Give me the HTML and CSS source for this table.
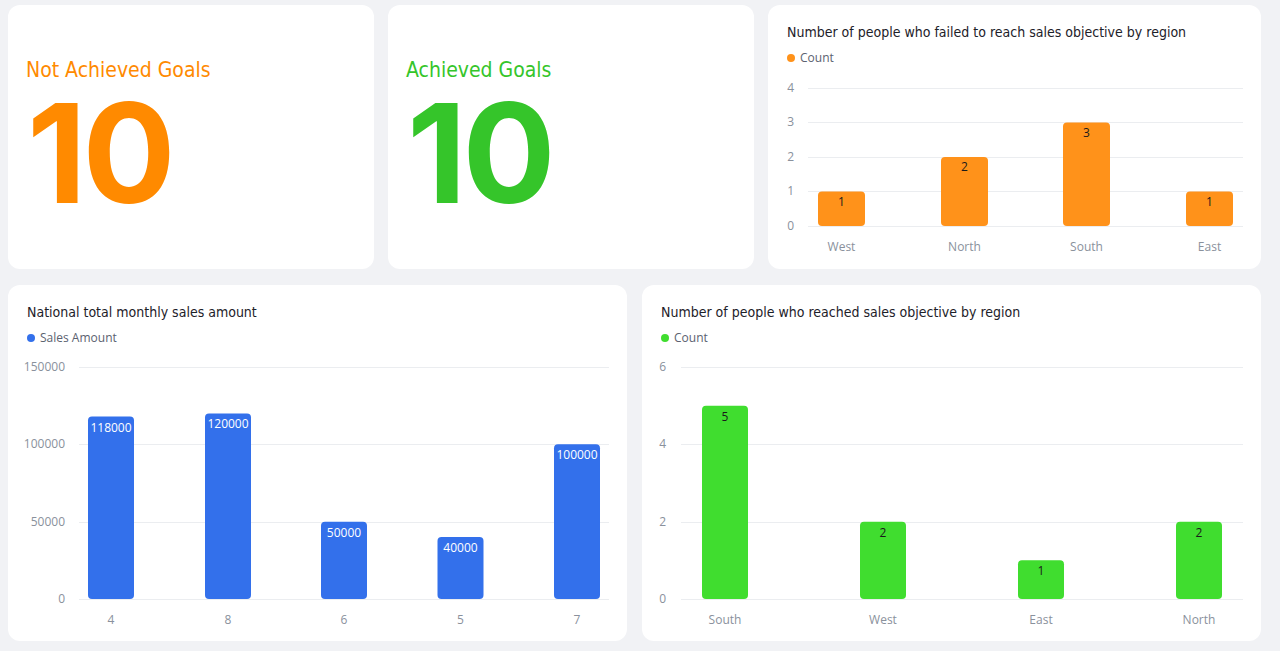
FILE: index.html
```html
<!DOCTYPE html>
<html>
<head>
<meta charset="utf-8">
<link rel="stylesheet" href="styles.css">
</head>
<body>
<div class="dash">
  <div class="row top">
    <div class="card stat">
      <div class="stat-title orange">Not Achieved Goals</div>
      <div class="stat-num orange">10</div>
    </div>
    <div class="card stat">
      <div class="stat-title green">Achieved Goals</div>
      <div class="stat-num green">10</div>
    </div>
    <div class="card chart">
      <div class="chart-title">Number of people who failed to reach sales objective by region</div>
      <div class="legend"><span class="dot dot-orange"></span>Count</div>
      <svg class="plot" width="493" height="194" viewBox="0 0 493 194">
        <g class="grid">
          <line x1="40" x2="475" y1="13.5" y2="13.5"/>
          <line x1="40" x2="475" y1="47.5" y2="47.5"/>
          <line x1="40" x2="475" y1="82.5" y2="82.5"/>
          <line x1="40" x2="475" y1="116.5" y2="116.5"/>
          <line x1="40" x2="475" y1="151.5" y2="151.5"/>
        </g>
        <g class="ylab" text-anchor="end">
          <text x="26" y="17">4</text>
          <text x="26" y="51">3</text>
          <text x="26" y="86">2</text>
          <text x="26" y="120">1</text>
          <text x="26" y="155">0</text>
        </g>
        <g class="bar-orange">
          <rect x="50" y="116.5" width="47" height="34.5" rx="4"/>
          <rect x="173" y="82" width="47" height="69" rx="4"/>
          <rect x="295" y="47.5" width="47" height="103.5" rx="4"/>
          <rect x="418" y="116.5" width="47" height="34.5" rx="4"/>
        </g>
        <g class="vlab dark" text-anchor="middle">
          <text x="73.5" y="130.5">1</text>
          <text x="196.5" y="96">2</text>
          <text x="318.5" y="61.5">3</text>
          <text x="441.5" y="130.5">1</text>
        </g>
        <g class="xlab" text-anchor="middle">
          <text x="73.5" y="176">West</text>
          <text x="196.5" y="176">North</text>
          <text x="318.5" y="176">South</text>
          <text x="441.5" y="176">East</text>
        </g>
      </svg>
    </div>
  </div>
  <div class="row bottom">
    <div class="card chart">
      <div class="chart-title">National total monthly sales amount</div>
      <div class="legend"><span class="dot dot-blue"></span>Sales Amount</div>
      <svg class="plot" width="619" height="286" viewBox="0 0 619 286">
        <g class="grid">
          <line x1="71" x2="601" y1="12.5" y2="12.5"/>
          <line x1="71" x2="601" y1="89.5" y2="89.5"/>
          <line x1="71" x2="601" y1="167.5" y2="167.5"/>
          <line x1="71" x2="601" y1="244.5" y2="244.5"/>
        </g>
        <g class="ylab" text-anchor="end">
          <text x="57" y="16">150000</text>
          <text x="57" y="93">100000</text>
          <text x="57" y="171">50000</text>
          <text x="57" y="248">0</text>
        </g>
        <g class="bar-blue">
          <rect x="80" y="61.5" width="46" height="182.5" rx="4"/>
          <rect x="197" y="58.4" width="46" height="185.6" rx="4"/>
          <rect x="313" y="166.7" width="46" height="77.3" rx="4"/>
          <rect x="429.5" y="182.1" width="46" height="61.9" rx="4"/>
          <rect x="546" y="89.3" width="46" height="154.7" rx="4"/>
        </g>
        <g class="vlab light" text-anchor="middle">
          <text x="103" y="76.5">118000</text>
          <text x="220" y="73.4">120000</text>
          <text x="336" y="181.7">50000</text>
          <text x="452.5" y="197.1">40000</text>
          <text x="569" y="104.3">100000</text>
        </g>
        <g class="xlab" text-anchor="middle">
          <text x="103" y="269">4</text>
          <text x="220" y="269">8</text>
          <text x="336" y="269">6</text>
          <text x="452.5" y="269">5</text>
          <text x="569" y="269">7</text>
        </g>
      </svg>
    </div>
    <div class="card chart">
      <div class="chart-title">Number of people who reached sales objective by region</div>
      <div class="legend"><span class="dot dot-green"></span>Count</div>
      <svg class="plot" width="619" height="286" viewBox="0 0 619 286">
        <g class="grid">
          <line x1="39" x2="601" y1="12.5" y2="12.5"/>
          <line x1="39" x2="601" y1="89.5" y2="89.5"/>
          <line x1="39" x2="601" y1="167.5" y2="167.5"/>
          <line x1="39" x2="601" y1="244.5" y2="244.5"/>
        </g>
        <g class="ylab" text-anchor="end">
          <text x="24" y="16">6</text>
          <text x="24" y="93">4</text>
          <text x="24" y="171">2</text>
          <text x="24" y="248">0</text>
        </g>
        <g class="bar-green">
          <rect x="60" y="50.7" width="46" height="193.3" rx="4"/>
          <rect x="218" y="166.7" width="46" height="77.3" rx="4"/>
          <rect x="376" y="205.3" width="46" height="38.7" rx="4"/>
          <rect x="534" y="166.7" width="46" height="77.3" rx="4"/>
        </g>
        <g class="vlab dark" text-anchor="middle">
          <text x="83" y="65.7">5</text>
          <text x="241" y="181.7">2</text>
          <text x="399" y="220.3">1</text>
          <text x="557" y="181.7">2</text>
        </g>
        <g class="xlab" text-anchor="middle">
          <text x="83" y="269">South</text>
          <text x="241" y="269">West</text>
          <text x="399" y="269">East</text>
          <text x="557" y="269">North</text>
        </g>
      </svg>
    </div>
  </div>
</div>
</body>
</html>
```
FILE: styles.css
```css
html, body {
  margin: 0;
  padding: 0;
  background: #f1f2f5;
}
.dash {
  padding: 5px 19px 10px 8px;
  display: flex;
  flex-direction: column;
  gap: 16px;
  font-family: "Open Sans", "Noto Sans", sans-serif;
}
.row {
  display: grid;
  gap: 14px;
}
.row.top {
  grid-template-columns: 366px 366px 493px;
  height: 264px;
}
.row.bottom {
  grid-template-columns: 619px 619px;
  gap: 15px;
  height: 356px;
}
.card {
  background: #ffffff;
  border-radius: 12px;
  overflow: hidden;
  display: flex;
  flex-direction: column;
}
.stat {
  padding: 53px 18px 0 18px;
}
.stat-title {
  font-family: "DejaVu Sans Condensed", "DejaVu Sans", sans-serif;
  font-stretch: condensed;
  font-size: 21px;
  line-height: 24px;
}
.stat-num {
  font-family: Inter, Roboto, "Liberation Sans", sans-serif;
  font-weight: 700;
  font-size: 138px;
  line-height: 140px;
  margin-left: 1px;
  margin-top: 1px;
  letter-spacing: -4px;
}
.orange { color: #ff8a00; }
.green { color: #35c52a; }
.chart-title {
  font-family: "DejaVu Sans Condensed", "DejaVu Sans", sans-serif;
  font-stretch: condensed;
  font-size: 14px;
  line-height: 20px;
  color: #1d2129;
  padding: 17px 18px 0 19px;
}
.legend {
  display: flex;
  align-items: center;
  font-size: 12px;
  line-height: 16px;
  color: #5b6270;
  padding: 8px 0 0 18px;
  height: 16px;
}
.dot {
  width: 8px;
  height: 8px;
  border-radius: 50%;
  margin-right: 5px;
  margin-left: 1px;
}
.dot-orange { background: #ff921a; }
.dot-blue { background: #3370eb; }
.dot-green { background: #40dd2f; }
.plot {
  display: block;
  margin-top: 9px;
}
.grid line {
  stroke: #ebedf0;
  stroke-width: 1;
}
.ylab text, .xlab text {
  font-size: 12px;
  fill: #8a919c;
}
.vlab text {
  font-size: 12px;
}
.vlab.dark text { fill: #1a1a1a; }
.vlab.light text { fill: #ffffff; }
.bar-orange rect { fill: #ff921a; }
.bar-blue rect { fill: #3370eb; }
.bar-green rect { fill: #40dd2f; }
```
